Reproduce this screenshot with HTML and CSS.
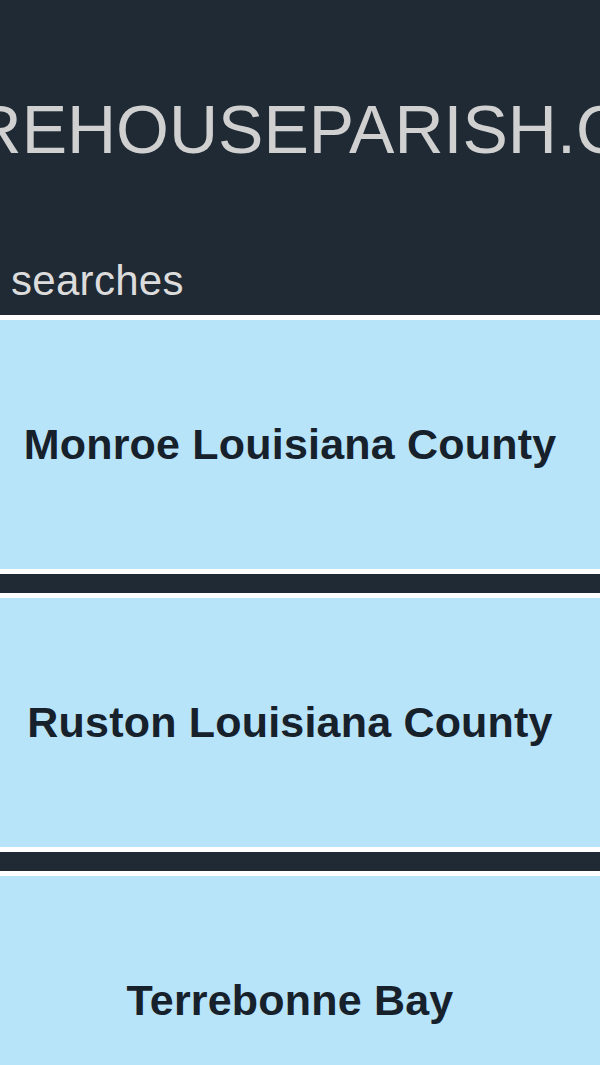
FILE: index.html
```html
<!DOCTYPE html>
<html lang="en">
<head>
<meta charset="utf-8">
<title>Warehouse Parish</title>
<link rel="stylesheet" href="styles.css">
</head>
<body>
<header class="top">
  <div class="brand-row"><h1 class="brand">WAREHOUSEPARISH.COM</h1></div>
  <p class="label">searches</p>
</header>
<main class="list">
  <a class="card" href="#">Monroe Louisiana County</a>
  <a class="card" href="#">Ruston Louisiana County</a>
  <a class="card" href="#">Terrebonne Bay</a>
</main>
</body>
</html>
```
FILE: styles.css
```css
html, body {
  margin: 0;
  padding: 0;
}
body {
  background: #1f2a34;
  font-family: "Liberation Sans", Arial, sans-serif;
  overflow: hidden;
  width: 600px;
}
.top {
  padding: 90px 0 10px 0;
}
.brand-row {
  display: flex;
  justify-content: center;
  width: 600px;
  overflow: hidden;
}
.brand {
  margin: 0;
  flex: none;
  white-space: nowrap;
  font-weight: normal;
  font-size: 68px;
  line-height: 78px;
  color: #d0d0d0;
}
.label {
  margin: 89px 0 0 0;
  padding-left: 11px;
  font-size: 42px;
  letter-spacing: 0.3px;
  line-height: 48px;
  color: #dcdcdc;
}
.list {
  display: flex;
  flex-direction: column;
  gap: 19px;
}
.card {
  display: flex;
  align-items: center;
  justify-content: center;
  height: 249px;
  padding-right: 20px;
  background: #b8e4fa;
  border-top: 5px solid #ffffff;
  border-bottom: 5px solid #ffffff;
  color: #17212b;
  font-weight: bold;
  font-size: 43px;
  letter-spacing: 0.2px;
  text-decoration: none;
  white-space: nowrap;
}
```
